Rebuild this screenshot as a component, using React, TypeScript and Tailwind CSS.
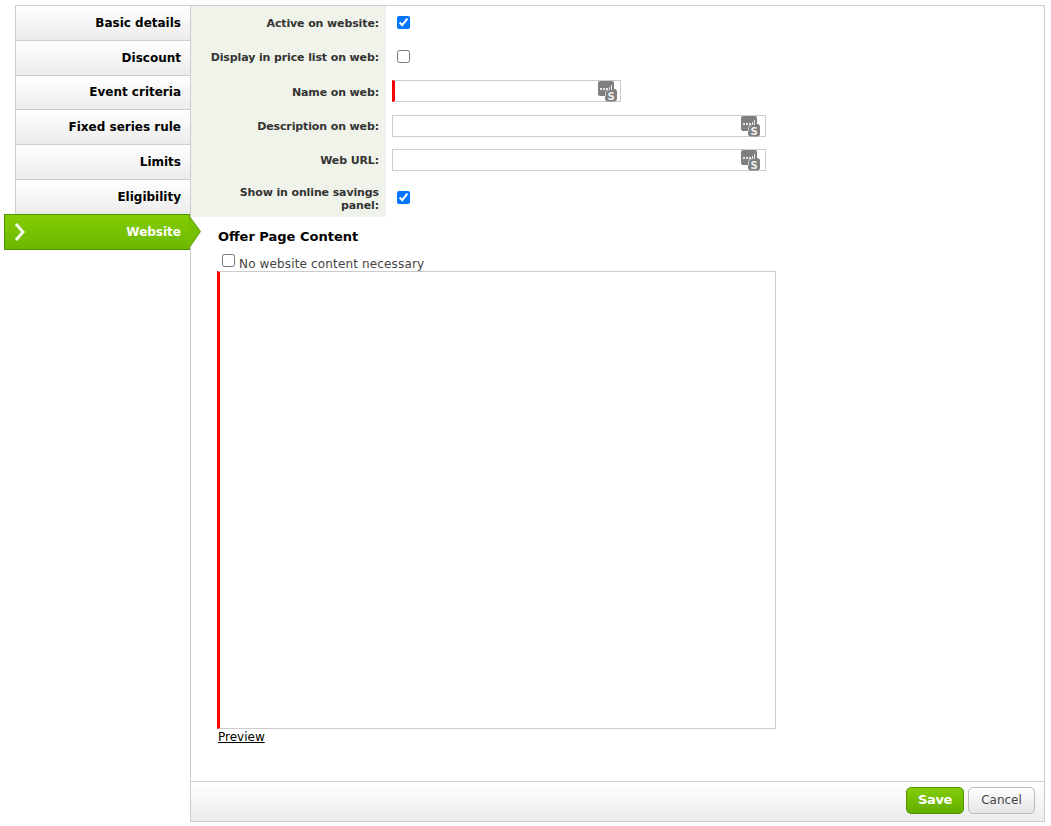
import { useState } from 'react';

const tabs = [
  { label: 'Basic details', height: 'h-[35px]', text: '' },
  { label: 'Discount', height: 'h-[35px]', text: '' },
  { label: 'Event criteria', height: 'h-[34px]', text: 'pb-px' },
  { label: 'Fixed series rule', height: 'h-[35px]', text: '' },
  { label: 'Limits', height: 'h-[35px]', text: '' },
  { label: 'Eligibility', height: 'h-[35px]', text: '' },
];

function LangIcon() {
  return (
    <svg width="19" height="21" viewBox="0 0 19 21">
      <path d="M2 0h12a2 2 0 0 1 2 2v13H2a2 2 0 0 1-2-2V2a2 2 0 0 1 2-2z" fill="#7f7f7f" />
      <rect x="7" y="8" width="12" height="12.5" rx="3" fill="#7f7f7f" />
      <path d="M7.5 15.5V12a3 3 0 0 1 3-3" fill="none" stroke="#c8c8c8" strokeWidth="1" />
      <rect x="2" y="7" width="2" height="2" fill="#e6e6e6" />
      <rect x="5" y="7" width="2" height="2" fill="#e6e6e6" />
      <rect x="8" y="7" width="2" height="2" fill="#e6e6e6" />
      <rect x="11" y="6" width="1" height="3" fill="#e6e6e6" />
      <rect x="13" y="4" width="1" height="5" fill="#e6e6e6" />
      <text x="9.5" y="18.5" fontSize="10" fontWeight="700" fill="#eee" fontFamily="'DejaVu Sans', sans-serif">S</text>
    </svg>
  );
}

function FieldRow({ label, height, labelPad = '', children }: { label: React.ReactNode; height: string; labelPad?: string; children: React.ReactNode }) {
  return (
    <div className={`flex ${height}`}>
      <div className={`flex w-[195px] items-center justify-end bg-[#f0f3ea] pl-4 pr-[7px] text-right text-[11px] font-bold leading-[13px] tracking-[-0.12px] text-[#333] ${labelPad}`}>
        {label}
      </div>
      <div className="flex items-center pl-[6px]">{children}</div>
    </div>
  );
}

function TextField({ width, iconRight, required }: { width: string; iconRight: string; required?: boolean }) {
  return (
    <div className={`relative -mt-px h-[22px] ${width} border border-[#ccc] bg-white ${required ? 'border-l-[3px] border-l-[#f00]' : ''}`}>
      <div className={`absolute top-0 flex ${iconRight}`}>
        <LangIcon />
      </div>
    </div>
  );
}

export default function App() {
  const [noContent, setNoContent] = useState(false);
  const [showPrice, setShowPrice] = useState(false);

  return (
    <div className="flex h-[826px] bg-white pl-[15px] pr-[6px] pb-[4px] pt-[5px] font-['DejaVu_Sans',sans-serif]">
      <div className="w-[175px] shrink-0">
        {tabs.map((tab) => (
          <div
            key={tab.label}
            className={`flex ${tab.height} items-center justify-end border-l border-t border-[#ccc] bg-gradient-to-b from-white to-[#ececec] pr-[9px] text-[12px] font-bold text-black ${tab.text}`}
          >
            {tab.label}
          </div>
        ))}
        <div className="relative z-10 -ml-[11px] flex h-[36px] w-[186px] items-center justify-between border border-[#4f9400] bg-gradient-to-b from-[#84cd05] to-[#6bb800] pl-[8px] pr-[8px] text-[12px] font-bold text-white">
          <svg width="14" height="18" viewBox="0 0 14 18">
            <path d="M3 1 L10 9 L3 17" fill="none" stroke="#f4f9e8" strokeWidth="3" />
          </svg>
          Website
          <svg width="14" height="36" viewBox="0 0 14 36" className="absolute -right-[13px] -top-px">
            <path d="M0 0.5 L12.5 17.5 L0 35.5 Z" fill="#78c002" stroke="#5a9e00" strokeWidth="1" />
            <rect x="0" y="1" width="1" height="34" fill="#78c002" />
          </svg>
        </div>
      </div>

      <div className="flex min-w-0 flex-1 flex-col border border-[#ccc]">
        <div className="flex-1">
          <div>
            <FieldRow label="Active on website:" height="h-[34px]">
              <input type="checkbox" defaultChecked className="ml-[5px] -mt-px h-[13px] w-[13px]" />
            </FieldRow>
            <FieldRow label="Display in price list on web:" height="h-[34px]">
              <input type="checkbox" checked={showPrice} onChange={(e) => setShowPrice(e.target.checked)} className="ml-[5px] -mt-px h-[13px] w-[13px]" />
            </FieldRow>
            <FieldRow label="Name on web:" height="h-[35px]" labelPad="pt-[2px]">
              <TextField width="w-[229px]" iconRight="right-[3px]" required />
            </FieldRow>
            <FieldRow label="Description on web:" height="h-[34px]">
              <TextField width="w-[374px]" iconRight="right-[5px]" />
            </FieldRow>
            <FieldRow label="Web URL:" height="h-[35px]">
              <TextField width="w-[374px]" iconRight="right-[5px]" />
            </FieldRow>
            <FieldRow label={<>Show in online savings<br />panel:</>} height="h-[39px]" labelPad="pt-[2px]">
              <input type="checkbox" defaultChecked className="ml-[5px] h-[13px] w-[13px]" />
            </FieldRow>
          </div>

          <div className="pl-[26px]">
            <h2 className="pl-px pt-[12px] text-[13px] font-bold leading-[16px] text-black">Offer Page Content</h2>
            <label className="ml-[5px] mt-[9px] flex h-[17px] items-center text-[12px] tracking-[0.15px] text-[#444]">
              <input type="checkbox" checked={noContent} onChange={(e) => setNoContent(e.target.checked)} className="mb-[5px] mr-[4px] h-[13px] w-[13px]" />
              <span className="pt-[3px]">No website content necessary</span>
            </label>
            <div className="h-[458px] w-[559px] border border-[#ccc] border-l-[3px] border-l-[#f00] bg-white" />
            <a href="#" className="ml-px block text-[12px] leading-[16px] text-black underline">Preview</a>
          </div>
        </div>

        <div className="flex h-[40px] items-center justify-end gap-[4px] border-t border-[#ccc] bg-gradient-to-b from-white to-[#ebebeb] pb-[3px] pr-[9px]">
          <button className="h-[27px] w-[58px] rounded-[5px] border border-[#4f9400] bg-gradient-to-b from-[#84cd05] to-[#62ad00] text-[13px] font-bold tracking-[-0.3px] text-white">Save</button>
          <button className="h-[27px] w-[67px] rounded-[5px] border border-[#bbb] bg-gradient-to-b from-white to-[#e4e4e4] text-[12px] text-[#444]">Cancel</button>
        </div>
      </div>
    </div>
  );
}
